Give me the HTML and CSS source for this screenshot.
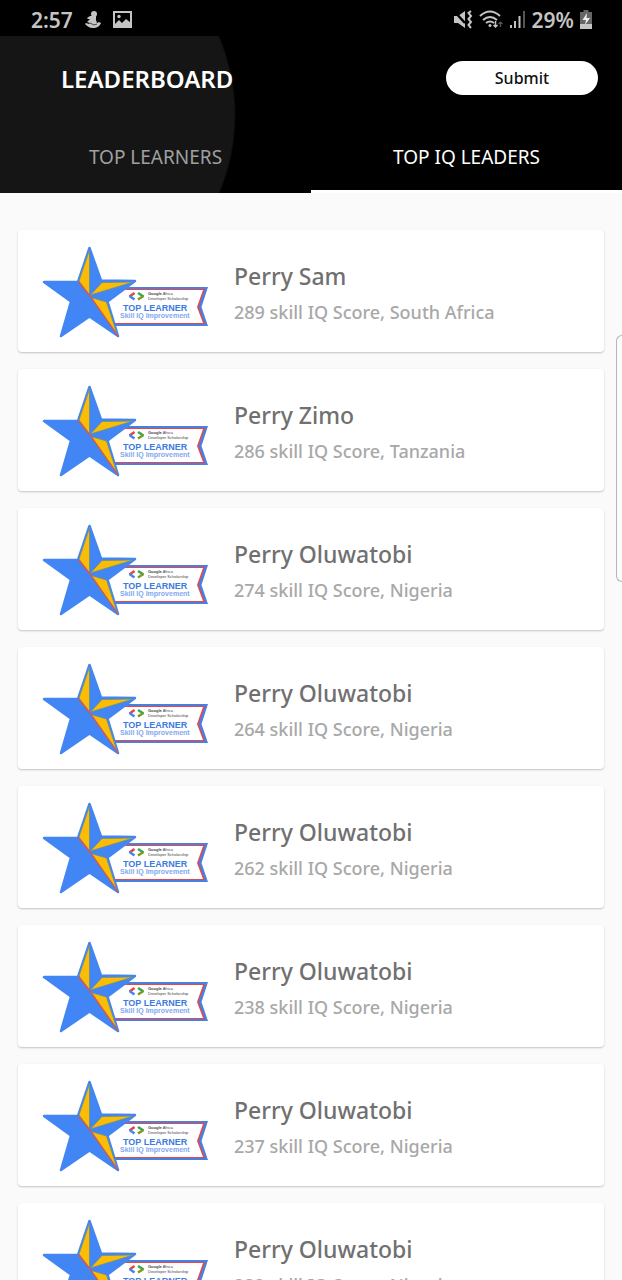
FILE: index.html
```html
<!DOCTYPE html>
<html lang="en">
<head>
<meta charset="utf-8">
<meta name="viewport" content="width=device-width, initial-scale=1">
<title>Leaderboard</title>
<link rel="stylesheet" href="styles.css">
</head>
<body>
<div class="status">
  <span class="status-group">
    <span>2:57</span>
    <svg width="16" height="18" viewBox="0 0 16 18" fill="#c4c4c4"><circle cx="9" cy="3" r="3"/><path d="M7 5h4v4l1 3 2-1 2 1c-1 3-4 5-8 5s-6-2-8-4l1-1 3 1 1-1-3-1 3-3H3L2 7l3-2z"/><path d="M5 12l4 2 3-1" stroke="#444" fill="none"/></svg>
    <svg width="20" height="17" viewBox="0 0 20 17"><path d="M1 1h17v15H1z" fill="none" stroke="#c4c4c4" stroke-width="2"/><path d="M2 13l4-4 3 3 4-4 5 4v4H2z" fill="#c4c4c4"/><circle cx="6" cy="5.500" r="1.700" fill="#c4c4c4"/></svg>
  </span>
  <span class="status-group status-right">
    <svg width="20" height="19" viewBox="0 0 20 19"><path d="M1 6h4l7-5v17l-7-5H1z" fill="#c4c4c4"/><path d="M0 0l12 13" stroke="#000" stroke-width="2.500"/><path d="M18 1l-2.500 2 2.500 3-2.500 3 2.500 3-2.500 3 2.500 3" stroke="#c4c4c4" stroke-width="2" fill="none"/></svg>
    <svg width="24" height="19" viewBox="0 0 24 19" fill="none" stroke="#c4c4c4" stroke-width="2"><path d="M1 6Q11-3 21 6M4 10q7-6 14 0M7 13q4-3 8 0"/><circle cx="11" cy="15.500" r="1.500" fill="#c4c4c4" stroke="none"/><path d="M16.500 11v6m-2-2l2 2 2-2" stroke-width="1.500"/><path d="M21.500 17v-5m-2 2l2-2 2 2" stroke="#555" stroke-width="1.200"/></svg>
    <svg width="17" height="19" viewBox="0 0 17 19"><path d="M1 15h2v3H1zM5 11h2v7H5zM9.500 6h2v12h-2z" fill="#c4c4c4"/><path d="M14 1h2v17h-2z" fill="#555"/></svg>
    <span>29%</span>
    <svg width="12" height="19" viewBox="0 0 12 19"><path d="M3.500 0h5v2H12v17H0V2h3.500z" fill="#666"/><path d="M0 14h12v5H0z" fill="#c4c4c4"/><path d="M7 3L2.500 10H6l-1 5 5-7H6.500z" fill="#eee"/></svg>
  </span>
</div>

<header class="header">
  <div class="bar">
    <h1 class="title">LEADERBOARD</h1>
    <button class="submit" type="button">Submit</button>
  </div>
  <nav class="tabs">
    <a class="tab" href="#learners">TOP LEARNERS</a>
    <a class="tab tab-active" href="#leaders" aria-current="page">TOP IQ LEADERS</a>
  </nav>
</header>

<main class="list" id="leaders"></main>
<div class="edge-handle"></div>

<template id="card">
  <article class="card">
    <svg class="badge" viewBox="0 0 190 110">
      <path d="M80 51H178L171.500 71L178 90H80Z" fill="#4a7fe0"/>
      <path d="M80 53H175L168.500 71L175 88H80Z" fill="#e5484a"/>
      <path d="M80 54H173L167 71L173 87H80Z" fill="#fff"/>
      <path d="M59.500 12L71 44.500L105 45L77.500 65.500L88 100L59.500 80.500L31 100L41 65.500L14 46H48Z" fill="#4285f4" stroke="#4285f4" stroke-width="2.500" stroke-linejoin="round"/>
      <path d="M59.500 14V59L49 45ZM60.500 59L72 46.500L103 46ZM61 61.500L76.500 66L87 98Z" fill="#fbbc05" stroke="#6f9080" stroke-width=".8"/>
      <path d="M48.500 46L60 60L88 100" fill="none" stroke="#dd5548" stroke-width="1.300"/>
      <path d="M104.500 57L99.500 60.500" stroke="#ea4335" stroke-width="2.500"/>
      <path d="M99.500 60L104.500 63.500" stroke="#4285f4" stroke-width="2.500"/>
      <path d="M108 57L113.500 60.500" stroke="#34a853" stroke-width="2.500"/>
      <path d="M113.500 60L108 63.500" stroke="#7a9a20" stroke-width="2.500"/>
      <g class="badge-text">
        <text class="badge-small" x="118" y="59"><tspan class="badge-bold">Google</tspan> Africa</text>
        <text class="badge-small" x="118" y="64">Developer Scholarship</text>
        <text class="badge-title" x="93" y="75">TOP LEARNER</text>
        <text class="badge-skill" x="90" y="82">Skill IQ Improvement</text>
      </g>
    </svg>
    <div class="info">
      <h2 class="name"></h2>
      <p class="score"></p>
    </div>
  </article>
</template>
<script src="script.js"></script>
</body>
</html>
```

FILE: script.js
```js
const leaders = [
  ["Perry Sam", 289, "South Africa"],
  ["Perry Zimo", 286, "Tanzania"],
  ["Perry Oluwatobi", 274, "Nigeria"],
  ["Perry Oluwatobi", 264, "Nigeria"],
  ["Perry Oluwatobi", 262, "Nigeria"],
  ["Perry Oluwatobi", 238, "Nigeria"],
  ["Perry Oluwatobi", 237, "Nigeria"],
  ["Perry Oluwatobi", 232, "Nigeria"]
];
const list = document.getElementById("leaders");
const template = document.getElementById("card");
for (const [name, score, country] of leaders) {
  const card = template.content.cloneNode(true);
  card.querySelector(".name").textContent = name;
  card.querySelector(".score").textContent = `${score} skill IQ Score, ${country}`;
  list.append(card);
}
```

FILE: styles.css
```css
* { box-sizing: border-box; }

body {
  margin: 0;
  height: 100vh;
  overflow: hidden;
  display: flex;
  flex-direction: column;
  background: #fafafa;
  font-family: "Noto Sans", "Open Sans", sans-serif;
}

.status {
  display: flex;
  flex: none;
  justify-content: space-between;
  height: 36px;
  padding: 3px 30px 0 31px;
  background: #000;
  color: #c4c4c4;
  font-size: 21px;
  font-weight: 600;
}

.status-group { display: flex; align-items: center; gap: 12px; }
.status-right { gap: 6px; }

.header {
  flex: none;
  background: radial-gradient(circle at 37px 79px, #151515 197px, #000 199px);
}

.bar {
  display: flex;
  align-items: center;
  justify-content: space-between;
  height: 84px;
  padding: 0 24px 0 61px;
}

.title {
  margin: 0;
  color: #fff;
  font-size: 24px;
  font-weight: 600;
}

.submit {
  width: 152px;
  height: 34px;
  border: 0;
  border-radius: 17px;
  background: #fff;
  color: #111;
  font: 500 16px "Noto Sans", sans-serif;
}

.tabs { display: flex; height: 73px; }

.tab {
  flex: 1;
  display: flex;
  align-items: center;
  justify-content: center;
  padding-top: 4px;
  border-bottom: 3px solid transparent;
  color: #a0a0a0;
  font-size: 19px;
  text-decoration: none;
}

.tab-active { border-color: #fff; color: #fff; }

.list {
  flex: 1;
  min-height: 0;
  display: flex;
  flex-direction: column;
  gap: 17px;
  padding: 37px 18px 0;
  overflow: hidden;
}

.card {
  flex: none;
  display: flex;
  align-items: center;
  gap: 14px;
  height: 122px;
  padding: 0 12px;
  border-radius: 4px;
  background: #fff;
  box-shadow: 0 1px 2px rgba(0, 0, 0, .22);
}

.badge { flex: none; width: 190px; height: 110px; }
.badge-text { font-family: "Liberation Sans", sans-serif; }
.badge-small { font-size: 4px; fill: #444; }
.badge-bold { font-weight: 700; }
.badge-title { font-size: 9px; font-weight: 700; fill: #3d7be0; }
.badge-skill { font-size: 7px; font-weight: 700; fill: #7fa8ef; }

.info { flex: 1; min-width: 0; padding-top: 5px; }

.name {
  margin: 0;
  color: #707070;
  font-size: 23px;
  line-height: 36px;
  font-weight: 500;
}

.score {
  margin: 0;
  color: #a8a8a8;
  font-size: 18px;
  line-height: 36px;
  font-weight: 500;
}

.edge-handle {
  position: absolute;
  top: 335px;
  right: 0;
  width: 6px;
  height: 247px;
  border: 1px solid #b5b5b5;
  border-right: 0;
  border-radius: 8px 0 0 8px;
  background: #fcfcfc;
}
```
